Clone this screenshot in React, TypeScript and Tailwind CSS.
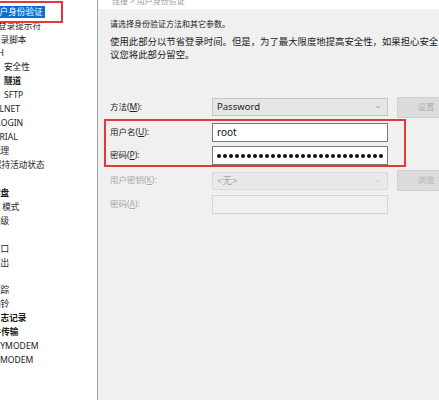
import { ChevronDown } from 'lucide-react';

const font = "font-['Noto_Sans','Noto_Sans_CJK_SC',sans-serif]";

// tree rows: the left part of the tree is scrolled out of view, so each row is shifted left
const treeRows = [
  { text: '用户身份验证', shift: 'ml-[-9px]', selected: true },
  { text: '登录提示符', shift: 'ml-[-2px]' },
  { text: '登录脚本', shift: 'ml-[-8px]' },
  { text: 'SSH', shift: 'ml-[-12px]' },
  { text: '安全性', shift: 'ml-[4px]' },
  { text: '隧道', shift: 'ml-[4px]', bold: true },
  { text: 'SFTP', shift: 'ml-[4px]' },
  { text: 'TELNET', shift: 'ml-[-10px]' },
  { text: 'RLOGIN', shift: 'ml-[-9px]' },
  { text: 'SERIAL', shift: 'ml-[-10px]' },
  { text: '代理', shift: 'ml-[-8px]' },
  { text: '保持活动状态', shift: 'ml-[-7px]' },
  { text: '', shift: '' },
  { text: '键盘', shift: 'ml-[-8px]', bold: true },
  { text: 'VT 模式', shift: 'ml-[-10px]' },
  { text: '高级', shift: 'ml-[-8px]' },
  { text: '', shift: '' },
  { text: '窗口', shift: 'ml-[-8px]' },
  { text: '突出', shift: 'ml-[-8px]' },
  { text: '', shift: '' },
  { text: '跟踪', shift: 'ml-[-8px]' },
  { text: '响铃', shift: 'ml-[-8px]' },
  { text: '日志记录', shift: 'ml-[-8px]', bold: true },
  { text: '文件传输', shift: 'ml-[-16px]', bold: true },
  { text: 'X/YMODEM', shift: 'ml-[-8px]' },
  { text: 'ZMODEM', shift: 'ml-[-5px]' },
];

function Label({ text, hotkey, disabled }: { text: string; hotkey: string; disabled?: boolean }) {
  return (
    <span className={`w-[102px] shrink-0 text-[8.5px] ${disabled ? 'text-[#a6a6a6]' : 'text-[#222]'}`}>
      {text}(<span className="underline">{hotkey}</span>):
    </span>
  );
}

function Combo({ value, disabled }: { value: string; disabled?: boolean }) {
  return (
    <div
      className={`w-[176px] h-[18px] shrink-0 flex items-center justify-between pl-[4px] pr-[5px] border ${
        disabled ? 'bg-[#e9e9e9] border-[#dadada] text-[#a6a6a6]' : 'bg-[#e6e6e6] border-[#c6c6c6] text-[#222]'
      }`}
    >
      <span className="text-[9.5px] leading-none">{value}</span>
      <ChevronDown className={`w-[8px] h-[8px] ${disabled ? 'text-[#c4c4c4]' : 'text-[#8a8a8a]'}`} strokeWidth={2} />
    </div>
  );
}

function Btn({ text }: { text: string }) {
  return (
    <div className="w-[58px] h-[21px] shrink-0 flex items-center justify-center bg-[#dcdcdc] border border-[#d0d0d0] text-[8.5px] text-[#b0b0b0]">
      {text}
    </div>
  );
}

export default function App() {
  return (
    <div className={`w-[439px] h-[400px] overflow-hidden flex bg-white ${font}`}>
      <div className="relative w-[98px] shrink-0 border-r border-[#a3a3a3] overflow-hidden pt-[5px]">
        {treeRows.map((row, i) => (
          <div key={i} className="h-[13.95px] flex items-center whitespace-nowrap text-[8.6px] leading-none">
            {row.text && (
              <span
                className={`${row.shift} ${
                  row.selected ? 'bg-[#0b6fd4] text-white py-[2px] pr-[2px]' : 'text-[#1a1a1a]'
                } ${row.bold ? 'font-bold' : ''}`}
              >
                {row.text}
              </span>
            )}
          </div>
        ))}
        <div className="absolute left-[-10px] top-[1px] w-[73px] h-[22px] border-2 border-[#e4393c]" />
      </div>

      <div className="flex-1 bg-[#f0f0f0] whitespace-nowrap">
        <div className="h-[9px] bg-white overflow-hidden pl-[14px]">
          <div className="text-[8px] leading-none text-[#9a9a9a] mt-[-3px]">连接 &gt; 用户身份验证</div>
        </div>

        <div className="pl-[12px] pt-[8px] leading-[13px] text-[#222]">
          <p className="text-[8px]">请选择身份验证方法和其它参数。</p>
          <p className="mt-[5px] text-[9.4px]">
            使用此部分以节省登录时间。但是，为了最大限度地提高安全性，如果担心安全，建
            <br />
            议您将此部分留空。
          </p>
        </div>

        <div className="mt-[36px] h-[20px] pl-[12px] flex items-center gap-[9px]">
          <div className="flex items-center">
            <Label text="方法" hotkey="M" />
            <Combo value="Password" />
          </div>
          <Btn text="设置" />
        </div>

        <div className="mt-[2px] ml-[6px] w-[302px] border-2 border-[#e4393c] pl-[4px] pt-[2px] flex flex-col gap-[4px]">
          <div className="flex items-center">
            <Label text="用户名" hotkey="U" />
            <div className="w-[176px] h-[19px] bg-white border border-[#7a7a7a] flex items-center pl-[4px] text-[10px] text-[#111]">
              root
            </div>
          </div>
          <div className="flex items-center">
            <Label text="密码" hotkey="P" />
            <div className="w-[176px] h-[19px] bg-white border border-[#7a7a7a] flex items-center gap-[2px] pl-[4px]">
              {Array.from({ length: 28 }).map((_, i) => (
                <div key={i} className="w-[4px] h-[4px] rounded-full bg-[#111]" />
              ))}
            </div>
          </div>
        </div>

        <div className="mt-[3px] h-[21px] pl-[12px] flex items-center gap-[9px]">
          <div className="flex items-center">
            <Label text="用户密钥" hotkey="K" disabled />
            <Combo value="<无>" disabled />
          </div>
          <Btn text="浏览" />
        </div>

        <div className="mt-[4px] h-[19px] pl-[12px] flex items-center">
          <Label text="密码" hotkey="A" disabled />
          <div className="w-[176px] h-[19px] bg-[#f0f0f0] border border-[#d4d4d4]" />
        </div>
      </div>
    </div>
  );
}
